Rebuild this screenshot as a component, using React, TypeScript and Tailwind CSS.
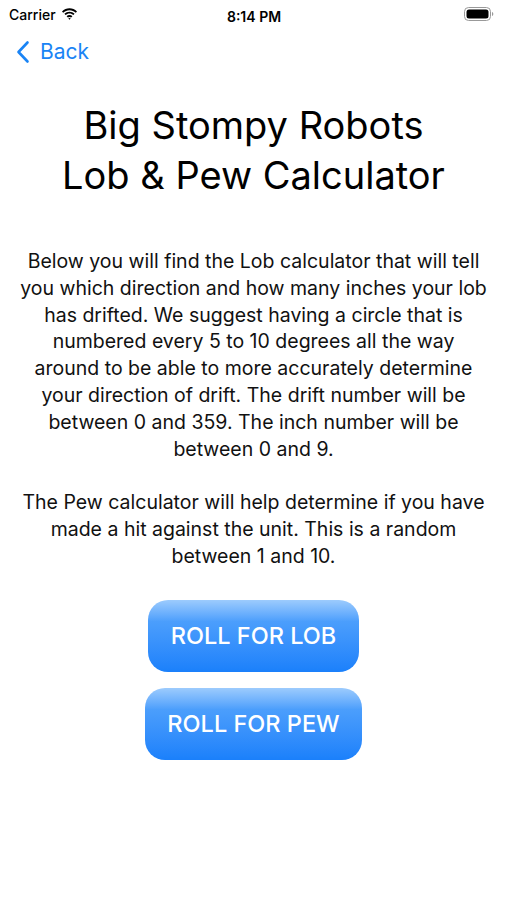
import React from "react";

export default function App() {
  const font = { fontFamily: "Inter, 'Noto Sans', sans-serif" };
  const p1 = [
    "Below you will find the Lob calculator that will tell",
    "you which direction and how many inches your lob",
    "has drifted. We suggest having a circle that is",
    "numbered every 5 to 10 degrees all the way",
    "around to be able to more accurately determine",
    "your direction of drift. The drift number will be",
    "between 0 and 359. The inch number will be",
    "between 0 and 9.",
  ];
  const p2 = [
    "The Pew calculator will help determine if you have",
    "made a hit against the unit. This is a random",
    "between 1 and 10.",
  ];
  return (
    <div className="w-[507px] h-[900px] bg-white text-black flex flex-col relative" style={font}>
      <div className="h-[28px] flex items-center justify-between px-[9px] text-[14px] font-medium">
        <div className="flex items-center gap-[5px]">
          <span>Carrier</span>
          <svg width="17" height="12" viewBox="0 0 17 12">
            <path d="M8.5 2.2c2.4 0 4.6.9 6.3 2.5l1.2-1.3C13.9 1.4 11.3.3 8.5.3S3.1 1.4 1 3.4l1.2 1.3C3.9 3.1 6.1 2.2 8.5 2.2z" fill="#000" />
            <path d="M8.5 5.6c1.5 0 2.8.6 3.9 1.5l1.2-1.3C12.2 4.5 10.4 3.7 8.5 3.7S4.8 4.5 3.4 5.8l1.2 1.3c1.1-.9 2.4-1.5 3.9-1.5z" fill="#000" />
            <path d="M8.5 8.9c.6 0 1.2.2 1.6.6l1.3-1.3c-.8-.7-1.8-1.1-2.9-1.1s-2.1.4-2.9 1.1l1.3 1.3c.4-.4 1-.6 1.6-.6zM8.5 11.7l1.2-1.3c-.3-.3-.7-.5-1.2-.5s-.9.2-1.2.5z" fill="#000" />
          </svg>
        </div>
        <span className="absolute left-[254px] -translate-x-1/2 top-[6px] text-[14px] font-semibold">8:14 PM</span>
        <svg width="30" height="14" viewBox="0 0 30 14" className="mr-[4px]">
          <rect x="0.5" y="0.5" width="26" height="13" rx="4" fill="none" stroke="#999" />
          <rect x="2.5" y="2.5" width="22" height="9" rx="2.5" fill="#000" />
          <path d="M28 5v4c.8-.3 1.3-1 1.3-2s-.5-1.7-1.3-2z" fill="#999" />
        </svg>
      </div>
      <div className="h-[48px] flex items-center pl-[16px] text-[#1a84f5] text-[21px] gap-[10px]">
        <svg width="14" height="24" viewBox="0 0 14 24">
          <path d="M11.5 2.5 L2.5 12 L11.5 21.5" fill="none" stroke="#1a84f5" strokeWidth="2.6" strokeLinecap="round" strokeLinejoin="round" />
        </svg>
        <span>Back</span>
      </div>
      <div className="mt-[24px] text-center text-[38px] leading-[50px]">
        <div>Big Stompy Robots</div>
        <div>Lob &amp; Pew Calculator</div>
      </div>
      <div className="mt-[48px] text-center text-[19.5px] leading-[26.8px] text-[#111] whitespace-nowrap">
        {p1.map((l) => (
          <div key={l}>{l}</div>
        ))}
        <div className="h-[26.8px]" />
        {p2.map((l) => (
          <div key={l}>{l}</div>
        ))}
      </div>
      <div className="mt-[30px] flex flex-col items-center gap-[16px]">
        <button className="w-[211px] h-[72px] rounded-[20px] bg-gradient-to-b from-[#9ccbfd] via-[#4b9efc] via-30% to-[#1a80fb] text-white text-[23.5px] font-medium">
          ROLL FOR LOB
        </button>
        <button className="w-[217px] h-[72px] rounded-[20px] bg-gradient-to-b from-[#9ccbfd] via-[#4b9efc] via-30% to-[#1a80fb] text-white text-[23.5px] font-medium">
          ROLL FOR PEW
        </button>
      </div>
    </div>
  );
}
